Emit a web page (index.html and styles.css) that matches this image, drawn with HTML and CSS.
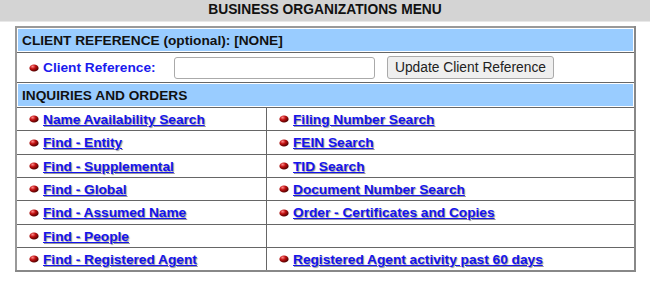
FILE: index.html
```html
<!DOCTYPE html>
<html>
<head>
<meta charset="utf-8">
<link rel="stylesheet" href="styles.css">
</head>
<body>
<div class="title">BUSINESS ORGANIZATIONS MENU</div>
<table class="menu">
  <tr><td class="section" colspan="2">CLIENT REFERENCE (optional): [NONE]</td></tr>
  <tr><td class="ref" colspan="2">
    <div class="refrow">
      <span class="item"><svg class="dot" viewBox="0 0 10 8"><defs><radialGradient id="g" cx="0.35" cy="0.3" r="0.7"><stop offset="0" stop-color="#ff8a8a"/><stop offset="0.45" stop-color="#c01010"/><stop offset="1" stop-color="#500000"/></radialGradient></defs><ellipse cx="5" cy="4" rx="4.6" ry="3.6" fill="url(#g)"/></svg><span class="label">Client Reference:</span></span>
      <input class="field" type="text">
      <button class="btn" type="button">Update Client Reference</button>
    </div>
  </td></tr>
  <tr><td class="section" colspan="2">INQUIRIES AND ORDERS</td></tr>
  <tr>
    <td class="cell left"><span class="item"><svg class="dot" viewBox="0 0 10 8"><ellipse cx="5" cy="4" rx="4.6" ry="3.6" fill="url(#g)"/></svg><a href="#">Name Availability Search</a></span></td>
    <td class="cell"><span class="item"><svg class="dot" viewBox="0 0 10 8"><ellipse cx="5" cy="4" rx="4.6" ry="3.6" fill="url(#g)"/></svg><a href="#">Filing Number Search</a></span></td>
  </tr>
  <tr>
    <td class="cell left"><span class="item"><svg class="dot" viewBox="0 0 10 8"><ellipse cx="5" cy="4" rx="4.6" ry="3.6" fill="url(#g)"/></svg><a href="#">Find - Entity</a></span></td>
    <td class="cell"><span class="item"><svg class="dot" viewBox="0 0 10 8"><ellipse cx="5" cy="4" rx="4.6" ry="3.6" fill="url(#g)"/></svg><a href="#">FEIN Search</a></span></td>
  </tr>
  <tr>
    <td class="cell left"><span class="item"><svg class="dot" viewBox="0 0 10 8"><ellipse cx="5" cy="4" rx="4.6" ry="3.6" fill="url(#g)"/></svg><a href="#">Find - Supplemental</a></span></td>
    <td class="cell"><span class="item"><svg class="dot" viewBox="0 0 10 8"><ellipse cx="5" cy="4" rx="4.6" ry="3.6" fill="url(#g)"/></svg><a href="#">TID Search</a></span></td>
  </tr>
  <tr>
    <td class="cell left"><span class="item"><svg class="dot" viewBox="0 0 10 8"><ellipse cx="5" cy="4" rx="4.6" ry="3.6" fill="url(#g)"/></svg><a href="#">Find - Global</a></span></td>
    <td class="cell"><span class="item"><svg class="dot" viewBox="0 0 10 8"><ellipse cx="5" cy="4" rx="4.6" ry="3.6" fill="url(#g)"/></svg><a href="#">Document Number Search</a></span></td>
  </tr>
  <tr>
    <td class="cell left"><span class="item"><svg class="dot" viewBox="0 0 10 8"><ellipse cx="5" cy="4" rx="4.6" ry="3.6" fill="url(#g)"/></svg><a href="#">Find - Assumed Name</a></span></td>
    <td class="cell"><span class="item"><svg class="dot" viewBox="0 0 10 8"><ellipse cx="5" cy="4" rx="4.6" ry="3.6" fill="url(#g)"/></svg><a href="#">Order - Certificates and Copies</a></span></td>
  </tr>
  <tr>
    <td class="cell left"><span class="item"><svg class="dot" viewBox="0 0 10 8"><ellipse cx="5" cy="4" rx="4.6" ry="3.6" fill="url(#g)"/></svg><a href="#">Find - People</a></span></td>
    <td class="cell"></td>
  </tr>
  <tr>
    <td class="cell left"><span class="item"><svg class="dot" viewBox="0 0 10 8"><ellipse cx="5" cy="4" rx="4.6" ry="3.6" fill="url(#g)"/></svg><a href="#">Find - Registered Agent</a></span></td>
    <td class="cell"><span class="item"><svg class="dot" viewBox="0 0 10 8"><ellipse cx="5" cy="4" rx="4.6" ry="3.6" fill="url(#g)"/></svg><a href="#">Registered Agent activity past 60 days</a></span></td>
  </tr>
</table>
</body>
</html>
```
FILE: styles.css
```css
html, body {
  margin: 0;
  padding: 0;
  background: #ffffff;
  font-family: "Liberation Sans", Arial, sans-serif;
  font-size: 13px;
}
.title {
  background: #d4d4d4;
  height: 21px;
  line-height: 19px;
  text-align: center;
  font-weight: bold;
  font-size: 13.8px;
  color: #111;
  border-bottom: 1px solid #e8e8e8;
}
.menu {
  margin: 4px 0 0 15px;
  width: 621px;
  border-collapse: collapse;
  border: 2px solid #888;
  border-top-color: #999;
  border-left-color: #999;
}
.menu td {
  border: 1px solid #666;
  padding: 0;
}
.section {
  background: #99ccff;
  box-shadow: inset 0 0 0 1px #ffffff;
  height: 24px;
  padding-left: 5px !important;
  font-weight: bold;
  font-size: 13.7px;
  color: #111;
}
.ref {
  height: 29px;
}
.refrow {
  display: flex;
  align-items: center;
  padding-left: 12px;
}
.item {
  display: inline-flex;
  align-items: center;
}
.dot {
  width: 10px;
  height: 8px;
  margin-right: 4px;
}
.label {
  color: #1a1aee;
  font-weight: bold;
  font-size: 13.7px;
  width: 131px;
}
.field {
  width: 201px;
  height: 22px;
  box-sizing: border-box;
  border: 1px solid #aaa;
  border-radius: 3px;
  padding: 0;
  margin: 0 12px 0 0;
  background: #fff;
}
.btn {
  height: 23px;
  width: 167px;
  padding: 0;
  font-family: "Liberation Sans", Arial, sans-serif;
  font-size: 13.8px;
  color: #222;
  background: #efefef;
  border: 1px solid #aaa;
  border-radius: 3px;
}
.cell {
  height: 22.35px;
  padding-left: 12px !important;
}
.left {
  width: 237px;
}
.cell a {
  color: #1414ee;
  font-weight: bold;
  font-size: 13.7px;
  text-decoration: underline;
  text-shadow: 1px 1px 1px #999;
}
```
